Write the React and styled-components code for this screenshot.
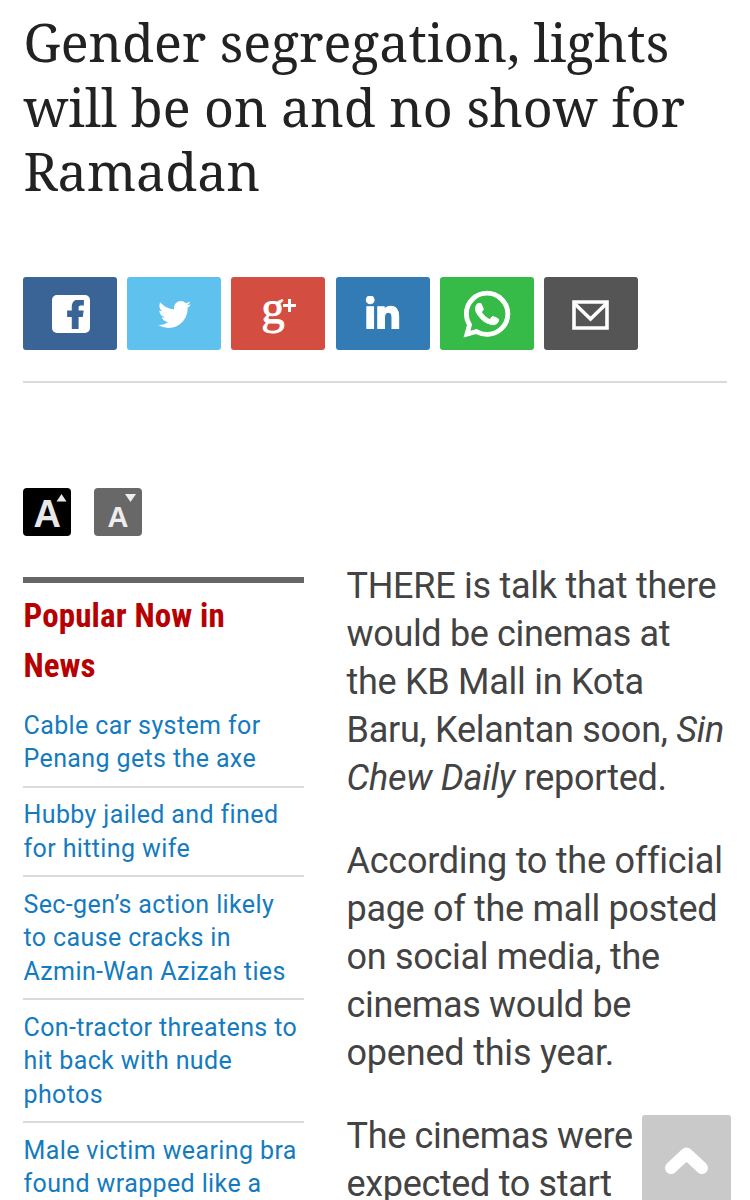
import styled, { createGlobalStyle } from 'styled-components'
import { FaFacebookF, FaTwitter, FaLinkedinIn, FaWhatsapp } from 'react-icons/fa'

const GlobalStyle = createGlobalStyle`
  body{
    margin: 0;
    background: #fff;
    overflow: hidden;
  }
  *{
    box-sizing: border-box;
  }
`

const Page = styled.main`
  position: relative;
  width: 750px;
  height: 1200px;
  overflow: hidden;
  padding: 10px 23px 0;
  font-family: Roboto, sans-serif;
`

const Line = styled.span`
  display: block;
  white-space: nowrap;
  letter-spacing: ${({ $ls }) => $ls || 0}px;
`

const Title = styled.h1`
  margin: 0;
  height: 267.3px;
  padding-left: 0.5px;
  font-family: 'Noto Serif', 'DejaVu Serif', serif;
  font-weight: 400;
  font-size: 52px;
  line-height: 64.5px;
  color: #222;
`

const ShareBar = styled.div`
  display: flex;
  gap: 10.2px;
  height: 105.7px;
  border-bottom: 2px solid #dadada;
`

const ShareButton = styled.a`
  display: flex;
  align-items: center;
  justify-content: center;
  width: 94px;
  height: 72.6px;
  padding-top: 2px;
  border-radius: 3px;
  color: #fff;
  background: ${({ $bg }) => $bg};
`

const FacebookBox = styled.span`
  display: flex;
  align-items: flex-end;
  justify-content: flex-end;
  width: 38px;
  height: 38px;
  margin: 0 0 2px 1px;
  padding-bottom: 4px;
  border-radius: 5px;
  background: #fff;
  color: #3a6396;
  svg{
    stroke: #3a6396;
    stroke-width: 20px;
  }
`

const GoogleMark = styled.span`
  display: flex;
  align-items: flex-start;
  height: 62px;
  font-family: 'Liberation Serif', serif;
  font-size: 47px;
  line-height: 46px;
  -webkit-text-stroke: 0.8px #fff;
  svg{
    margin: 15px 0 0 -2px;
  }
`

const WhatsappIcon = styled(FaWhatsapp)`
  margin: 0 0 2px 1px;
  stroke: #fff;
  stroke-width: 10px;
`

const LinkedinIcon = styled(FaLinkedinIn)`
  stroke: #fff;
  stroke-width: 14px;
`

const SizeBar = styled.div`
  display: flex;
  gap: 23px;
  margin-top: 105px;
`

const SizeButton = styled.button`
  display: flex;
  width: 48px;
  height: 48px;
  padding: 0;
  border: 0;
  border-radius: 4px;
  background: ${({ $bg }) => $bg};
`

const Columns = styled.div`
  display: flex;
  justify-content: space-between;
  align-items: flex-start;
`

const Sidebar = styled.aside`
  width: 281px;
  margin-top: 41px;
  border-top: 6px solid #666;
`

const SidebarTitle = styled.h2`
  margin: 0;
  padding: 8px 0 7px 0.5px;
  font-family: 'Roboto Condensed', Roboto, sans-serif;
  font-stretch: 75%;
  font-weight: 700;
  font-size: 33px;
  line-height: 50px;
  color: #b70000;
`

const NewsItem = styled.a`
  display: block;
  padding: 10.9px 0 10.1px 0.5px;
  border-bottom: 2px solid #dadada;
  font-size: 25px;
  line-height: 33.3px;
  color: #147bc0;
`

const Article = styled.article`
  width: 380.5px;
  margin-top: 26px;
  font-size: 36px;
  line-height: 48px;
  color: #434343;
  p{
    margin: 0 0 35px;
  }
`

const TopButton = styled.button`
  position: absolute;
  left: 642px;
  top: 1115px;
  width: 89px;
  height: 90px;
  padding: 0;
  border: 0;
  border-radius: 3px;
  background: #c9c9c9;
`

const news = [
  ['Cable car system for', 'Penang gets the axe'],
  ['Hubby jailed and fined', 'for hitting wife'],
  ['Sec-gen’s action likely', 'to cause cracks in', 'Azmin-Wan Azizah ties'],
  ['Con-tractor threatens to', 'hit back with nude', 'photos'],
  ['Male victim wearing bra', 'found wrapped like a'],
]

const Share = () => (
  <ShareBar>
    <ShareButton $bg="#3a6396">
      <FacebookBox><FaFacebookF size={29} /></FacebookBox>
    </ShareButton>
    <ShareButton $bg="#5fc1ed"><FaTwitter size={33} /></ShareButton>
    <ShareButton $bg="#d44d41">
      <GoogleMark>
        g
        <svg width="13" height="13" viewBox="0 0 13 13">
          <path d="M6.5 0V13M0 6.5H13" stroke="#fff" strokeWidth="3" />
        </svg>
      </GoogleMark>
    </ShareButton>
    <ShareButton $bg="#327bb4"><LinkedinIcon size={37} /></ShareButton>
    <ShareButton $bg="#36ba48"><WhatsappIcon size={52} /></ShareButton>
    <ShareButton $bg="#555">
      <svg width="37" height="30" viewBox="0 0 37 30" fill="none" stroke="#fff" strokeWidth="3.6">
        <path d="M2 2H35V28H2Z" />
        <path d="M3 4L18.5 19L34 4" />
      </svg>
    </ShareButton>
  </ShareBar>
)

const FontSize = () => (
  <SizeBar>
    <SizeButton $bg="#000">
      <svg width="48" height="48" viewBox="0 0 48 48" fill="#e8e8e8">
        <text x="10.500" y="38.500" fontFamily="Liberation Sans" fontWeight="700" fontSize="38">A</text>
        <path d="M33.500 13.500L38.500 6L43.500 13.500Z" />
      </svg>
    </SizeButton>
    <SizeButton $bg="#686868">
      <svg width="48" height="48" viewBox="0 0 48 48" fill="#eee">
        <text x="13.500" y="38.500" fontFamily="Liberation Sans" fontWeight="700" fontSize="29">A</text>
        <path d="M31 6H42L36.500 14Z" />
      </svg>
    </SizeButton>
  </SizeBar>
)

export default function App() {
  return (
    <>
      <GlobalStyle />
      <Page>
        <Title>
          <Line>Gender segregation, lights</Line>
          <Line>will be on and no show for</Line>
          <Line>Ramadan</Line>
        </Title>
        <Share />
        <FontSize />
        <Columns>
          <Sidebar>
            <SidebarTitle>
              <Line $ls={0.13}>Popular Now in</Line>
              <Line>News</Line>
            </SidebarTitle>
            {news.map((lines) => (
              <NewsItem key={lines[0]}>
                {lines.map((text) => <Line key={text} $ls={0.38}>{text}</Line>)}
              </NewsItem>
            ))}
          </Sidebar>
          <Article>
            <p>
              <Line $ls={-0.27}>THERE is talk that there</Line>
              <Line $ls={-0.34}>would be cinemas at</Line>
              <Line $ls={-0.28}>the KB Mall in Kota</Line>
              <Line $ls={-0.26}>Baru, Kelantan soon, <i>Sin</i></Line>
              <Line $ls={-0.25}><i>Chew Daily</i> reported.</Line>
            </p>
            <p>
              <Line $ls={-0.25}>According to the official</Line>
              <Line $ls={-0.3}>page of the mall posted</Line>
              <Line $ls={-0.3}>on social media, the</Line>
              <Line $ls={-0.34}>cinemas would be</Line>
              <Line $ls={-0.2}>opened this year.</Line>
            </p>
            <p>
              <Line $ls={-0.34}>The cinemas were</Line>
              <Line $ls={-0.34}>expected to start</Line>
            </p>
          </Article>
        </Columns>
        <TopButton aria-label="Back to top">
          <svg width="89" height="90" viewBox="0 0 89 90" fill="none">
            <path d="M29 53L44.500 38.500L60 53" stroke="#fff" strokeWidth="12" strokeLinecap="round" strokeLinejoin="round" />
          </svg>
        </TopButton>
      </Page>
    </>
  )
}
